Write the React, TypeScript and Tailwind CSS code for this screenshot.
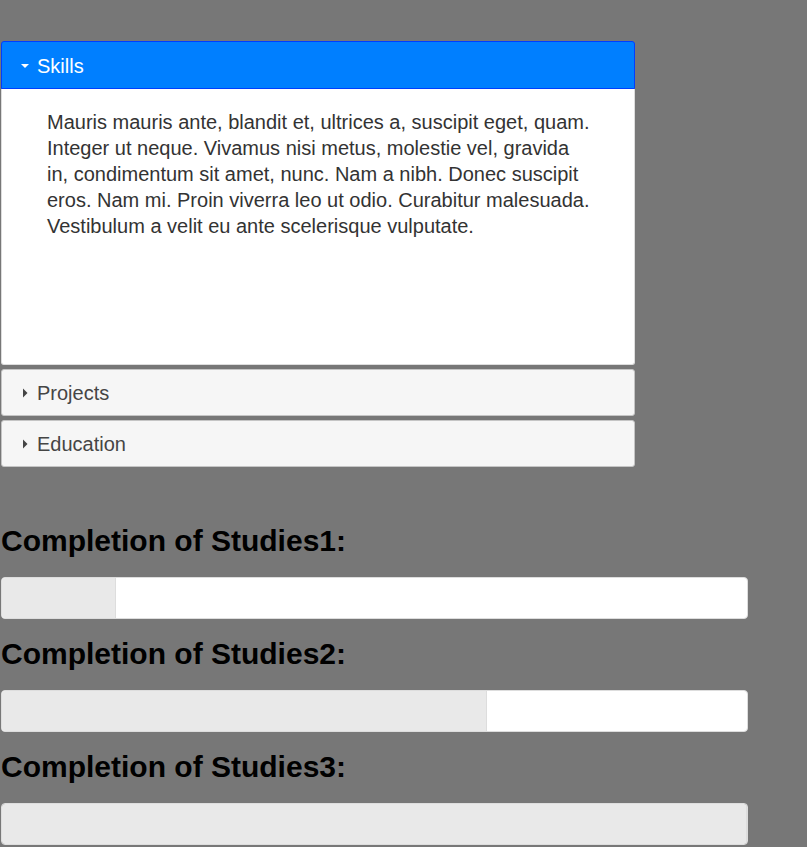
import { useState } from 'react';

const sections = [
  {
    key: 'skills',
    label: 'Skills',
    body:
      'Mauris mauris ante, blandit et, ultrices a, suscipit eget, quam. Integer ut neque. Vivamus nisi metus, molestie vel, gravida in, condimentum sit amet, nunc. Nam a nibh. Donec suscipit eros. Nam mi. Proin viverra leo ut odio. Curabitur malesuada. Vestibulum a velit eu ante scelerisque vulputate.',
  },
  { key: 'projects', label: 'Projects', body: '' },
  { key: 'education', label: 'Education', body: '' },
];

const studies = [
  { label: 'Completion of Studies1:', value: 15.3 },
  { label: 'Completion of Studies2:', value: 65.1 },
  { label: 'Completion of Studies3:', value: 100 },
];

function Caret({ open }: { open: boolean }) {
  // 작은 삼각형 아이콘
  return open ? (
    <svg width="10" height="6" viewBox="0 0 10 6" className="shrink-0">
      <path d="M1 1 L9 1 L5 5 Z" fill="#fff" />
    </svg>
  ) : (
    <svg width="6" height="10" viewBox="0 0 6 10" className="shrink-0">
      <path d="M1 0.5 L5.5 5 L1 9.5 Z" fill="#454545" />
    </svg>
  );
}

export default function App() {
  const [active, setActive] = useState('skills');

  return (
    <div
      className="min-h-screen bg-[#777777] pt-[41px] pl-px"
      style={{ fontFamily: '"Liberation Sans", Arial, sans-serif' }}
    >
      {/* Accordion */}
      <div className="w-[634px] flex flex-col gap-[4px]">
        {sections.map((s) => {
          const open = s.key === active;
          return (
            <div key={s.key}>
              <button
                onClick={() => setActive(s.key)}
                className={`w-full flex items-center gap-[7px] pl-[18px] pt-px text-left text-[20px] border ${
                  open
                    ? 'h-[48px] bg-[#007fff] border-[#003eff] text-white rounded-t-[3px]'
                    : 'h-[47px] bg-[#f6f6f6] border-[#c5c5c5] text-[#454545] rounded-[3px]'
                }`}
              >
                <span className="w-[10px] flex justify-center">
                  <Caret open={open} />
                </span>
                <span className="leading-none">{s.label}</span>
              </button>
              {open && (
                <div className="h-[276px] bg-white border border-t-0 border-[#dddddd] rounded-b-[3px] pt-[20px] pl-[45px] pr-[40px] text-[#333333] text-[20px] leading-[26px]">
                  {s.body}
                </div>
              )}
            </div>
          );
        })}
      </div>

      {/* Progress */}
      <div className="mt-[57px] w-[747px]">
        {studies.map((st) => (
          <div key={st.label}>
            <h2 className="text-[30px] font-bold text-black leading-[34px] mb-[19px]">{st.label}</h2>
            <div className="h-[42px] bg-white border border-[#dddddd] rounded-[4px] overflow-hidden mb-[18px]">
              <div
                className="h-full bg-[#e9e9e9] border-r border-[#dddddd]"
                style={{ width: `${st.value}%` }}
              />
            </div>
          </div>
        ))}
      </div>
    </div>
  );
}
